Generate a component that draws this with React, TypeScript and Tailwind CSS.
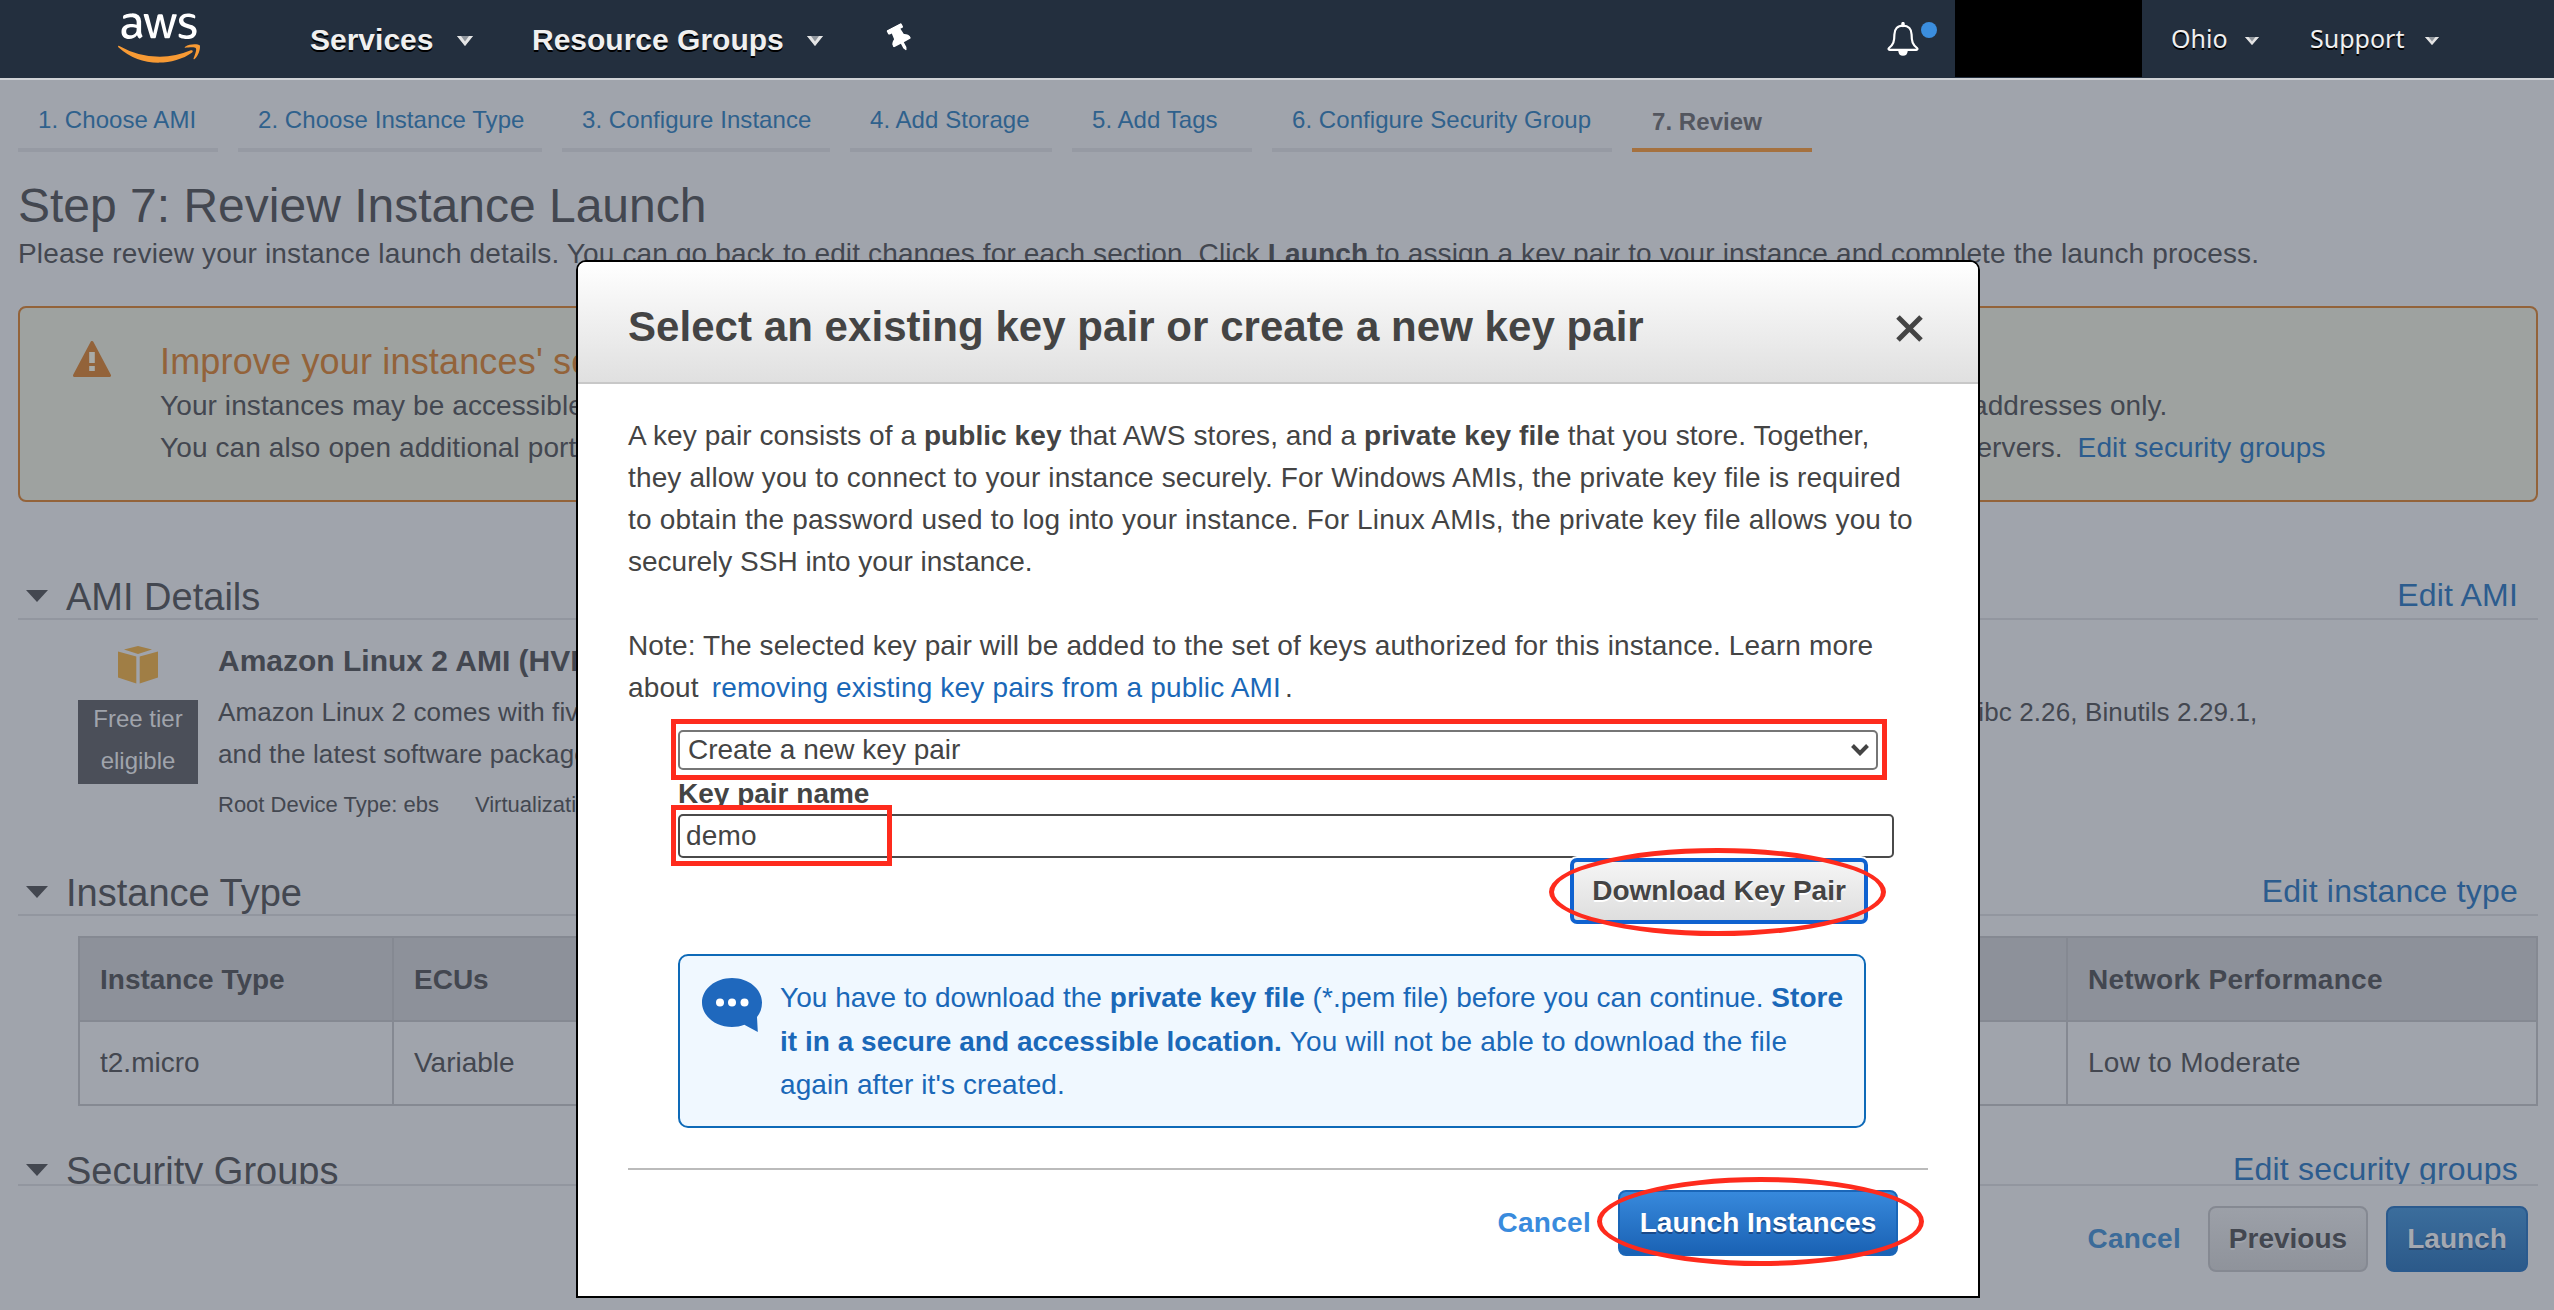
import React from "react";
import { FaAws, FaThumbtack } from "react-icons/fa";

const tabs = [
  { label: "1. Choose AMI", width: "w-[200px]" },
  { label: "2. Choose Instance Type", width: "w-[304px]" },
  { label: "3. Configure Instance", width: "w-[268px]" },
  { label: "4. Add Storage", width: "w-[202px]" },
  { label: "5. Add Tags", width: "w-[180px]" },
  { label: "6. Configure Security Group", width: "w-[340px]" },
];

const columns = [
  ["Instance Type", "t2.micro"],
  ["ECUs", "Variable"],
  ["vCPUs", "1"],
  ["Memory (GiB)", "1"],
  ["Instance Storage (GB)", "EBS only"],
  ["EBS-Optimized", "-"],
  ["Network Performance", "Low to Moderate"],
];

function Caret({ className }: { className: string }) {
  return (
    <svg viewBox="0 0 16 10" preserveAspectRatio="none" className={className}>
      <path d="M0 0h16L8 10z" fill="currentColor" />
    </svg>
  );
}

function NavCaret({ className }: { className: string }) {
  return (
    <svg viewBox="0 0 16 10" preserveAspectRatio="none" className={className}>
      <path d="M0 0h16L8 10z" fill="#8f959c" />
      <path d="M0 0h4l4 5.500L12 0h4L8 10z" fill="#e4e4e4" />
    </svg>
  );
}

function Bell() {
  return (
    <svg viewBox="0 0 32 34" className="h-[34px] w-8" fill="none" stroke="#fff" strokeWidth="2.2">
      <path d="M16 1.600v2" strokeWidth="3.4" strokeLinecap="round" />
      <path
        d="M16 3.600c-5.400 0-8.600 3.600-8.600 9 0 7-1 10-5.400 13.400-.9.9-.5 1.800.6 1.800h26.800c1.100 0 1.500-.9.6-1.800-4.400-3.400-5.400-6.400-5.400-13.400 0-5.400-3.200-9-8.600-9z"
        strokeLinejoin="round"
      />
      <path d="M12 28.800c.3 2.800 2 4.200 4 4.200s3.700-1.400 4-4.200z" fill="#fff" strokeWidth="1.500" />
    </svg>
  );
}

function TopBar() {
  return (
    <header className="flex h-20 items-start border-b-2 border-[#cfd2d6] bg-[#232f3e] font-bold text-[#f0f0f0]">
      <svg width="0" height="0" className="absolute">
        <defs>
          <linearGradient id="awsFill" x1="0" y1="0" x2="0" y2="1">
            <stop offset="0.6" stopColor="#fff" />
            <stop offset="0.6" stopColor="#f79a34" />
          </linearGradient>
        </defs>
      </svg>
      <FaAws fill="url(#awsFill)" className="mt-[5px] ml-[118px] h-[66px] w-[82px]" />
      <div className="ml-[110px] flex h-[78px] items-center text-[30px] [text-shadow:0_2px_0_#000]">
        <span className="w-[147px]">Services</span>
        <NavCaret className="mt-1 h-[10px] w-4" />
        <span className="ml-[59px] w-[275px] whitespace-nowrap">Resource Groups</span>
        <NavCaret className="mt-1 h-[10px] w-4" />
      </div>
      <FaThumbtack className="mt-[25px] ml-[67px] h-[27px] w-[20px] -rotate-[28deg] text-white" />
      <div className="mt-[22px] ml-[977px] flex gap-[2px]">
        <Bell />
        <span className="h-4 w-4 rounded-full bg-[#3b8ede]" />
      </div>
      <div className="ml-[18px] h-[77px] w-[187px] bg-black" />
      <div className="ml-[29px] flex h-[77px] items-center font-['Noto_Sans',sans-serif] text-[25px] font-normal [text-shadow:0_2px_0_#000]">
        <span className="w-[74px]">Ohio</span>
        <NavCaret className="mt-1 h-2 w-[14px]" />
        <span className="ml-[51px] w-[115px]">Support</span>
        <NavCaret className="mt-1 h-2 w-[14px]" />
      </div>
    </header>
  );
}

function Section({ title, link, className }: { title: string; link: string; className: string }) {
  return (
    <div
      className={"flex shrink-0 items-start overflow-hidden border-b-2 border-[#92969f] pr-5 pl-2 " + className}
    >
      <Caret className="mt-6 h-3 w-[22px] shrink-0" />
      <h2 className="ml-[18px] text-[38px] leading-[62px] whitespace-nowrap">{title}</h2>
      <a className="ml-auto text-[32px] leading-[58px] tracking-[0.2px] whitespace-nowrap text-[#2c5c8e]">{link}</a>
    </div>
  );
}

function Review() {
  return (
    <main className="flex h-[1230px] flex-col overflow-hidden bg-[#a0a4ac] pr-4 pl-[18px] text-[#434750]">
      <nav className="flex h-[72px] gap-5 text-[24px] leading-[80px] tracking-[0.06px] text-[#2f618c]">
        {tabs.map((t) => (
          <a key={t.label} className={"border-b-4 border-[#969aa3] pl-5 whitespace-nowrap " + t.width}>
            {t.label}
          </a>
        ))}
        <a className="w-[180px] border-b-4 border-[#a5713f] pl-5 leading-[84px] font-bold text-[#53565f]">7. Review</a>
      </nav>
      <h1 className="mt-[24px] text-[48px] leading-[60px] whitespace-nowrap">Step 7: Review Instance Launch</h1>
      <p className="-mt-[3px] text-[28px] leading-[42px] tracking-[0.14px] whitespace-nowrap">
        Please review your instance launch details. You can go back to edit changes for each section. Click <b>Launch</b>{" "}
        to assign a key pair to your instance and complete the launch process.
      </p>

      <section className="mt-[31px] flex h-[196px] shrink-0 rounded-lg border-2 border-[#93633a] bg-[#9ea2a0]">
        <svg viewBox="0 0 38 36" className="mt-[33px] ml-[53px] h-9 w-[38px]">
          <path
            d="M19 1.500L36.500 34.500h-35z"
            fill="#93633a"
            stroke="#93633a"
            strokeWidth="3"
            strokeLinejoin="round"
          />
          <path d="M16.200 11h5.600v11h-5.600zM16.200 25h5.600v5h-5.600z" fill="#a9aba8" />
        </svg>
        <div className="ml-[49px] text-[28px] leading-[42px] tracking-[0.1px] whitespace-nowrap">
          <h3 className="mt-[32px] text-[36px] leading-[44px] tracking-[0.17px] text-[#93633a]">
            Improve your instances' security. Your security group, launch-wizard-1, is open to the world.
          </h3>
          <p className="mt-[1px]">
            Your instances may be accessible from any IP address. We recommend that you update your security group rules
            to allow access from known IP addresses only.
          </p>
          <p>
            You can also open additional ports in your security group to facilitate access to the application or
            service you're running, e.g., HTTP (80) for web servers.{" "}
            <a className="ml-[7px] text-[#2c5c8e]">Edit security groups</a>
          </p>
        </div>
      </section>

      <Section className="mt-[64px] h-[54px]" title="AMI Details" link="Edit AMI" />
      <div className="ml-[60px] flex h-[242px] shrink-0">
        <div className="w-[120px]">
          <svg viewBox="0 0 40 38" className="mx-auto mt-[26px] h-[38px] w-10" fill="#a07e45">
            <path d="M6 3.500L20 0l14 3.500L20 8zM0 5.500l18.300 5V37.500L0 31.500zM40 5.500l-18.300 5V37.500L40 31.500z" />
          </svg>
          <div className="mt-4 flex h-[84px] justify-center bg-[#4b4f59] text-center text-[24px] leading-[42px] text-[#a0a4ac]">
            <span className="-mt-[2px]">
              Free tier
              <br />
              eligible
            </span>
          </div>
        </div>
        <div className="ml-5 whitespace-nowrap">
          <h4 className="mt-5 text-[30px] leading-[42px] font-bold">
            Amazon Linux 2 AMI (HVM), SSD Volume Type - ami-09558250a3419e7d0
          </h4>
          <p className="mt-[9px] text-[26px] leading-[42px] tracking-[0.12px]">
            Amazon Linux 2 comes with five years support. It provides Linux kernel 4.14 tuned for optimal performance on
            Amazon EC2, systemd 219, GCC 7.3, Glibc 2.26, Binutils 2.29.1,
            <br />
            and the latest software packages through extras.
          </p>
          <p className="mt-[9px] flex gap-9 text-[22px] leading-[42px]">
            <span>Root Device Type: ebs</span>
            <span>Virtualization type: hvm</span>
          </p>
        </div>
      </div>

      <Section className="h-[54px]" title="Instance Type" link="Edit instance type" />
      <div className="mt-5 ml-[60px] grid h-[170px] shrink-0 grid-cols-[314px_334px_335px_335px_335px_335px_472px] border-b-2 border-[#858992] text-[28px]">
        {columns.map(([head, value], i) => (
          <div
            key={head}
            className={
              "border-t-2 border-l-2 border-[#858992] leading-[82px] whitespace-nowrap " +
              (i === columns.length - 1 ? "border-r-2 tracking-[0.28px]" : "")
            }
          >
            <div className="h-[84px] border-b-2 border-[#858992] bg-[#8d919a] pl-5 leading-[84px] font-bold">{head}</div>
            <div className="h-[82px] pl-5">{value}</div>
          </div>
        ))}
      </div>

      <Section className="mt-[34px] h-[46px]" title="Security Groups" link="Edit security groups" />
      <footer className="mt-5 flex shrink-0 items-center justify-end pr-[10px] text-[28px] font-bold">
        <a className="tracking-[0.3px] text-[#3b6b99]">Cancel</a>
        <button className="ml-[27px] h-[66px] w-[160px] rounded-lg border-2 border-[#858992] bg-gradient-to-b from-[#9ca0a8] to-[#8f939b] [text-shadow:0_2px_0_#a0a4ac]">
          Previous
        </button>
        <button className="ml-[18px] h-[66px] w-[142px] rounded-lg border-2 border-[#2a5a8e] bg-gradient-to-b from-[#3b6d9c] to-[#2c5a8a] text-[#a4a8b0] [text-shadow:0_2px_0_#2c4a70]">
          Launch
        </button>
      </footer>
    </main>
  );
}

function KeyPairDialog() {
  return (
    <div
      role="dialog"
      className="absolute top-[260px] left-[576px] flex h-[1038px] w-[1404px] flex-col overflow-hidden rounded-t-[10px] border-2 border-black bg-white text-[28px] text-[#444]"
    >
      <div className="flex h-[122px] shrink-0 items-center border-b-2 border-[#c8c8c8] bg-gradient-to-b from-white to-[#e0e0e0] pr-[55px] pl-[50px]">
        <h2 className="pt-[10px] text-[42px] leading-[60px] font-bold tracking-[0.05px] whitespace-nowrap">
          Select an existing key pair or create a new key pair
        </h2>
        <svg viewBox="0 0 27 27" className="mt-[13px] ml-auto h-[27px] w-[27px]" stroke="#444" strokeWidth="5">
          <path d="M2 2l23 23M25 2L2 25" />
        </svg>
      </div>
      <div className="px-[50px] pt-[31px] leading-[42px] whitespace-nowrap">
        <p>
          <span className="tracking-[0.07px]">
            A key pair consists of a <b>public key</b> that AWS stores, and a <b>private key file</b> that you store.
            Together,
          </span>
          <br />
          <span className="tracking-[0.14px]">
            they allow you to connect to your instance securely. For Windows AMIs, the private key file is required
          </span>
          <br />
          <span className="tracking-[0.17px]">
            to obtain the password used to log into your instance. For Linux AMIs, the private key file allows you to
          </span>
          <br />
          securely SSH into your instance.
        </p>
        <p className="mt-[42px] tracking-[0.13px]">
          Note: The selected key pair will be added to the set of keys authorized for this instance. Learn more
          <br />
          about <a className="ml-[5px] tracking-[0.17px] text-[#1a68b8]">removing existing key pairs from a public AMI</a>
          <span className="ml-1">.</span>
        </p>
        <div className="mt-[21px] ml-[50px] flex h-10 w-[1200px] items-center rounded-[5px] border-2 border-[#767676] pr-[7px] pl-2">
          <span>Create a new key pair</span>
          <svg viewBox="0 0 18 12" className="ml-auto h-3 w-[18px]" fill="none" stroke="#444" strokeWidth="4">
            <path d="M1.500 1.500L9 9.200l7.500-7.700" />
          </svg>
        </div>
        <div className="mt-[3px] ml-[50px] h-[41px] font-bold">Key pair name</div>
        <div className="ml-[50px] flex h-11 w-[1216px] items-center rounded-[5px] border-2 border-[#4a4a4a] pl-[6px] tracking-[0.2px]">
          demo
        </div>
        <div className="flex w-[1240px] justify-end">
          <button className="h-[66px] w-[298px] rounded-[7px] border-4 border-[#0f62d0] bg-gradient-to-b from-[#f5f5f5] to-[#dedede] text-[28px] font-bold ring-2 ring-white [text-shadow:0_2px_0_#fff]">
            Download Key Pair
          </button>
        </div>
        <div className="mt-[30px] ml-[50px] flex h-[174px] w-[1188px] rounded-[10px] border-2 border-[#0e6ab8] bg-[#f0f8ff] text-[#1a68b8]">
          <svg viewBox="0 0 60 54" className="mt-[22px] ml-[22px] h-[54px] w-[60px]" fill="#1f68bd">
            <path d="M30 0C46.600 0 60 11 60 24.500c0 6-2 11-5 14.500l.8 15-13.500-7.200C38.500 48.500 34.400 49 30 49 13.400 49 0 38 0 24.500S13.400 0 30 0z" />
            <g fill="#fff">
              <circle cx="18" cy="24.500" r="4" />
              <circle cx="30" cy="24.500" r="4" />
              <circle cx="42.500" cy="24.500" r="4" />
            </g>
          </svg>
          <p className="mt-[21px] ml-[18px]">
            <span className="tracking-[0.03px]">
              You have to download the <b>private key file</b> (*.pem file) before you can continue. <b>Store</b>
            </span>
            <br />
            <span className="leading-[45px] tracking-[0.02px]">
              <b>it in a secure and accessible location.</b>{" "}
              <span className="tracking-[0.2px]">You will not be able to download the file</span>
            </span>
            <br />
            <span className="tracking-[0.1px]">again after it's created.</span>
          </p>
        </div>
        <div className="mt-10 border-t-2 border-[#bbb]" />
        <div className="mt-5 flex items-center justify-end pr-[30px] font-bold">
          <a className="mr-[27px] tracking-[0.3px] text-[#398bdd]">Cancel</a>
          <button className="h-[66px] w-[280px] rounded-lg border-2 border-[#1a66b8] bg-gradient-to-b from-[#3789dc] to-[#1a62b4] text-[28px] text-white [text-shadow:0_2px_0_#1a4a8a]">
            Launch Instances
          </button>
        </div>
      </div>
    </div>
  );
}

function Highlights() {
  return (
    <>
      <div className="absolute top-[719px] left-[671px] h-[61px] w-[1216px] border-5 border-[#fe2b1d]" />
      <div className="absolute top-[805px] left-[671px] h-[61px] w-[221px] border-5 border-[#fe2b1d]" />
      <div className="absolute top-[848px] left-[1549px] h-[88px] w-[337px] rounded-[50%] border-5 border-[#fe2b1d]" />
      <div className="absolute top-[1177px] left-[1597px] h-[89px] w-[327px] rounded-[50%] border-5 border-[#fe2b1d]" />
    </>
  );
}

export default function App() {
  return (
    <div className="relative h-[1310px] w-full overflow-hidden font-['Liberation_Sans',Arial,sans-serif]">
      <TopBar />
      <Review />
      <KeyPairDialog />
      <Highlights />
    </div>
  );
}
